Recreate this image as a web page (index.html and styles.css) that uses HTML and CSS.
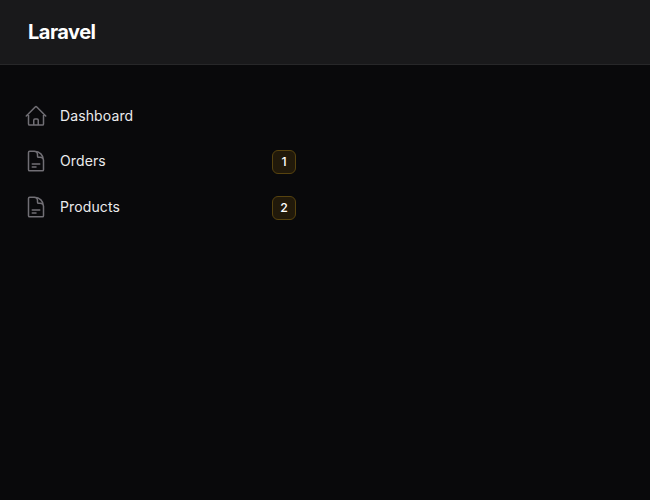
FILE: index.html
```html
<!DOCTYPE html>
<html lang="en">
<head>
<meta charset="utf-8">
<title>Laravel</title>
<link rel="stylesheet" href="styles.css">
</head>
<body>
<header class="topbar"><span class="brand">Laravel</span></header>
<nav class="sidebar">
<a class="item">
<svg class="icon" viewBox="0 0 24 24"><path d="m2.25 12 8.954-8.955c.44-.439 1.152-.439 1.591 0L21.75 12M4.5 9.75v10.125c0 .621.504 1.125 1.125 1.125H9.75v-4.875c0-.621.504-1.125 1.125-1.125h2.25c.621 0 1.125.504 1.125 1.125V21h4.125c.621 0 1.125-.504 1.125-1.125V9.75M8.25 21h8.25"/></svg>
<span class="label">Dashboard</span>
</a>
<a class="item">
<svg class="icon" viewBox="0 0 24 24"><path d="M19.5 14.25v-2.625a3.375 3.375 0 0 0-3.375-3.375h-1.5A1.125 1.125 0 0 1 13.5 7.125v-1.5a3.375 3.375 0 0 0-3.375-3.375H8.25m0 12.75h7.5m-7.5 3H12M10.5 2.25H5.625c-.621 0-1.125.504-1.125 1.125v17.25c0 .621.504 1.125 1.125 1.125h12.75c.621 0 1.125-.504 1.125-1.125V11.25a9 9 0 0 0-9-9Z"/></svg>
<span class="label">Orders</span><span class="badge">1</span>
</a>
<a class="item item-last">
<svg class="icon" viewBox="0 0 24 24"><path d="M19.5 14.25v-2.625a3.375 3.375 0 0 0-3.375-3.375h-1.5A1.125 1.125 0 0 1 13.5 7.125v-1.5a3.375 3.375 0 0 0-3.375-3.375H8.25m0 12.75h7.5m-7.5 3H12M10.5 2.25H5.625c-.621 0-1.125.504-1.125 1.125v17.25c0 .621.504 1.125 1.125 1.125h12.75c.621 0 1.125-.504 1.125-1.125V11.25a9 9 0 0 0-9-9Z"/></svg>
<span class="label">Products</span><span class="badge">2</span>
</a>
</nav>
</body>
</html>
```
FILE: styles.css
```css
* { box-sizing: border-box; }
body { margin: 0; min-height: 500px; background: #09090b; color: #ebebed; font-family: Inter, sans-serif; }
.topbar { display: flex; align-items: center; height: 65px; padding: 0 28px; background: #19191b; border-bottom: 1px solid #272729; }
.brand { color: #fff; font-size: 20px; line-height: 20px; font-weight: 700; letter-spacing: -0.5px; }
.sidebar { display: flex; flex-direction: column; gap: 5px; width: 320px; padding: 31px 24px; }
.item { display: flex; align-items: center; gap: 12px; height: 40px; }
.item-last { margin-top: 1px; }
.icon { width: 24px; height: 24px; fill: none; stroke: #716f75; stroke-width: 1.5; stroke-linecap: round; stroke-linejoin: round; }
.label { flex: 1; font-size: 14px; line-height: 24px; font-weight: 430; letter-spacing: 0.12px; }
.badge { width: 24px; height: 24px; margin-top: 2px; border: 1px solid #57430f; border-radius: 6px; background: #21190a; color: #fff; font-size: 12.3px; line-height: 22px; font-weight: 450; text-align: center; }
```
